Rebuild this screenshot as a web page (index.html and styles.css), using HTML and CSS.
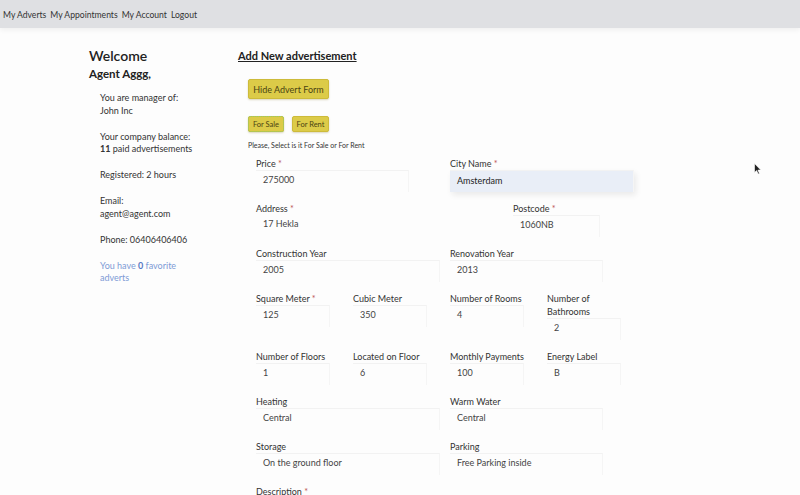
FILE: index.html
```html
<!DOCTYPE html>
<html>
<head>
<meta charset="utf-8">
<link rel="stylesheet" href="styles.css">
</head>
<body>
<nav class="topbar">
  <a class="navlink">My Adverts</a>
  <a class="navlink">My Appointments</a>
  <a class="navlink">My Account</a>
  <a class="navlink">Logout</a>
</nav>
<div class="page">
  <aside class="sidebar">
    <h1 class="welcome">Welcome</h1>
    <h2 class="agent">Agent Aggg,</h2>
    <div class="info">
      <p>You are manager of:<br>John Inc</p>
      <p>Your company balance:<br><b>11</b> paid advertisements</p>
      <p>Registered: 2 hours</p>
      <p>Email:<br>agent@agent.com</p>
      <p>Phone: 06406406406</p>
      <p class="fav">You have <b>0</b> favorite<br>adverts</p>
    </div>
  </aside>
  <main class="main">
    <h2 class="title">Add New advertisement</h2>
    <div class="btnrow first-row"><button class="ybtn big">Hide Advert Form</button></div>
    <div class="btnrow small-row">
      <button class="ybtn small sale">For Sale</button>
      <button class="ybtn small">For Rent</button>
    </div>
    <p class="hint">Please, Select is it For Sale or For Rent</p>
    <div class="form">
      <div class="field span2"><label>Price <span class="req">*</span></label><div class="input">275000</div></div>
      <div class="field span2"><label>City Name <span class="req">*</span></label><div class="input auto">Amsterdam</div></div>
      <div class="addr-row">
        <div class="field"><label>Address <span class="req">*</span></label><div class="input noline">17 Hekla</div></div>
        <div class="field"><label>Postcode <span class="req">*</span></label><div class="input">1060NB</div></div>
      </div>
      <div class="field span2"><label>Construction Year</label><div class="input">2005</div></div>
      <div class="field span2"><label>Renovation Year</label><div class="input">2013</div></div>
      <div class="field"><label>Square Meter <span class="req">*</span></label><div class="input">125</div></div>
      <div class="field"><label>Cubic Meter</label><div class="input">350</div></div>
      <div class="field"><label>Number of Rooms</label><div class="input">4</div></div>
      <div class="field"><label>Number of Bathrooms</label><div class="input">2</div></div>
      <div class="field"><label>Number of Floors</label><div class="input">1</div></div>
      <div class="field"><label>Located on Floor</label><div class="input">6</div></div>
      <div class="field"><label>Monthly Payments</label><div class="input">100</div></div>
      <div class="field"><label>Energy Label</label><div class="input">B</div></div>
      <div class="field span2"><label>Heating</label><div class="input">Central</div></div>
      <div class="field span2"><label>Warm Water</label><div class="input">Central</div></div>
      <div class="field span2"><label>Storage</label><div class="input">On the ground floor</div></div>
      <div class="field span2"><label>Parking</label><div class="input">Free Parking inside</div></div>
      <div class="field span4"><label>Description <span class="req">*</span></label></div>
    </div>
  </main>
</div>
<svg class="cursor" width="8" height="12" viewBox="0 0 8 12"><path d="M0.5 0.5 L0.5 9.5 L2.6 7.6 L4.2 11 L5.4 10.4 L3.9 7.1 L6.8 7.1 Z" fill="#222" stroke="#fff" stroke-width="0.6"/></svg>
</body>
</html>
```

FILE: styles.css
```css
html, body {
  margin: 0;
  padding: 0;
  background: #fdfdfd;
  font-family: Lato, "Open Sans", "DejaVu Sans", sans-serif;
  color: #333;
  overflow: hidden;
}
.topbar {
  height: 28px;
  background: #dfe0e3;
  box-shadow: 0 2px 5px rgba(0,0,0,0.06);
  display: flex;
  align-items: center;
  padding-left: 3px;
  gap: 4px;
  padding-top: 2px;
  box-sizing: border-box;
}
.navlink {
  font-size: 8.6px;
  color: #333;
  text-decoration: none;
}
.page {
  display: flex;
  padding-left: 89px;
  padding-top: 19px;
}
.sidebar {
  width: 149px;
  flex: none;
}
.welcome {
  margin: 0;
  font-size: 14px;
  font-weight: 600;
  line-height: 18px;
  color: #222;
}
.agent {
  margin: 0;
  font-size: 11.5px;
  font-weight: 700;
  line-height: 18px;
  color: #222;
}
.info {
  padding-left: 11px;
  padding-top: 9px;
}
.info p {
  margin: 0 0 13.5px;
  font-size: 9px;
  line-height: 12.5px;
  color: #333;
}
.info .fav {
  color: #7d9bd6;
}
.info .fav b { color: #5578c4; }
.main {
  width: 420px;
  flex: none;
}
.title {
  margin: 0;
  font-size: 11px;
  font-weight: 700;
  line-height: 18px;
  text-decoration: underline;
  color: #222;
}
.btnrow {
  padding-left: 10px;
  display: flex;
  gap: 8px;
}
.first-row { margin-top: 14px; }
.ybtn {
  font-family: inherit;
  background: #dccb48;
  border: 1px solid #cdbb3a;
  border-radius: 2px;
  color: #4a4312;
  padding: 0;
  box-shadow: 0 1px 2px rgba(120,100,0,0.25);
}
.big {
  width: 81px;
  height: 20px;
  font-size: 9px;
}
.small-row { margin-top: 17px; }
.small {
  width: 37px;
  height: 16px;
  font-size: 7.5px;
}
.sale { width: 36px; outline: 1px dotted #9bcf6a; outline-offset: -1px; }
.hint {
  margin: 8px 0 0 10px;
  font-size: 7px;
  line-height: 10px;
  color: #333;
}
.form {
  margin-top: 7px;
  padding-left: 18px;
  display: grid;
  grid-template-columns: repeat(4, 87px);
  column-gap: 10px;
  align-items: start;
}
.span2 { grid-column: span 2; }
.span4 { grid-column: span 4; }
.addr-row {
  grid-column: 1 / -1;
  display: grid;
  grid-template-columns: 249px 87px;
  column-gap: 8px;
}
.field {
  margin-bottom: 10px;
}
.field label {
  display: block;
  font-size: 9px;
  line-height: 13px;
  color: #333;
}
.req { color: #b55; }
.input {
  height: 22px;
  box-sizing: border-box;
  border-top: 1px solid #f2f2f2;
  border-right: 1px solid #f5f5f5;
  padding-left: 7px;
  font-size: 9px;
  line-height: 18px;
  color: #444;
  width: 85%;
}
.span2 .input { width: 100%; }
.span2:nth-child(odd) .input { width: 83%; }
.addr-row .field:first-child .input { border: none; }
.addr-row .field .input { width: 100%; }
.input.auto {
  background: #e9eef7;
  color: #222;
  box-shadow: 2px 3px 6px rgba(0,0,0,0.08);
  width: 100%;
  line-height: 19px;
}
.cursor {
  position: absolute;
  left: 754px;
  top: 163px;
}
```
